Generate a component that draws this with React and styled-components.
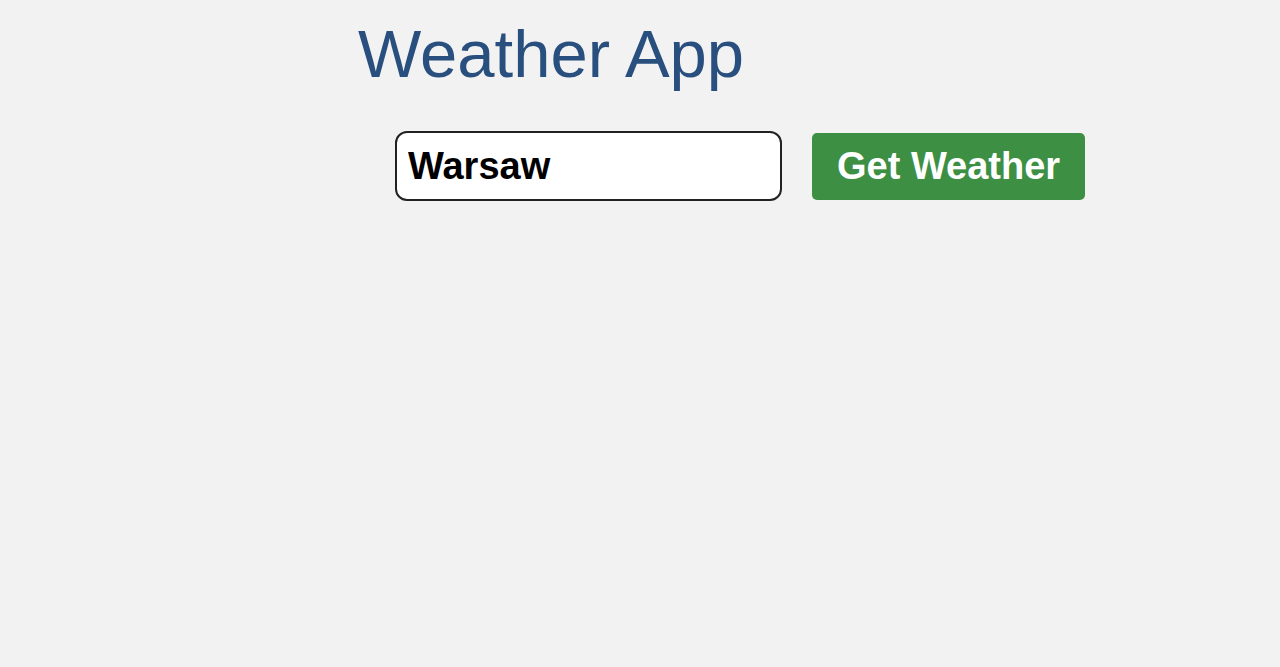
import { useState } from "react";
import styled, { createGlobalStyle } from "styled-components";

const GlobalStyles = createGlobalStyle`
  html, body {
    margin: 0;
    padding: 0;
    background: #f2f2f2;
    font-family: "Liberation Sans", Arial, sans-serif;
  }
`;

const Page = styled.main`
  min-height: 667px;
  padding: 17px 0 0 358px;
  box-sizing: border-box;
`;

const Title = styled.h1`
  margin: 0;
  font-size: 67px;
  font-weight: 400;
  line-height: 74px;
  color: #284f7e;
`;

const Form = styled.form`
  display: flex;
  align-items: center;
  gap: 30px;
  margin: 40px 0 0 37px;
`;

const CityInput = styled.input`
  width: 387px;
  height: 70px;
  box-sizing: border-box;
  padding: 0 11px;
  border: 2px solid #222;
  border-radius: 12px;
  background: #fff;
  font-family: "Liberation Sans", Arial, sans-serif;
  font-size: 38px;
  font-weight: 700;
  color: #000;
  caret-color: #000;
  outline: none;
`;

const Button = styled.button`
  height: 67px;
  padding: 0 25px;
  border: none;
  border-radius: 5px;
  background: #3d8f44;
  color: #fff;
  font-family: "Liberation Sans", Arial, sans-serif;
  font-size: 38px;
  font-weight: 700;
  cursor: pointer;
`;

export default function App() {
  const [city, setCity] = useState("Warsaw");

  const handleSubmit = (e) => {
    e.preventDefault();
  };

  return (
    <>
      <GlobalStyles />
      <Page>
        <Title>Weather App</Title>
        <Form onSubmit={handleSubmit}>
          <CityInput
            autoFocus
            value={city}
            onChange={(e) => setCity(e.target.value)}
          />
          <Button type="submit">Get Weather</Button>
        </Form>
      </Page>
    </>
  );
}
